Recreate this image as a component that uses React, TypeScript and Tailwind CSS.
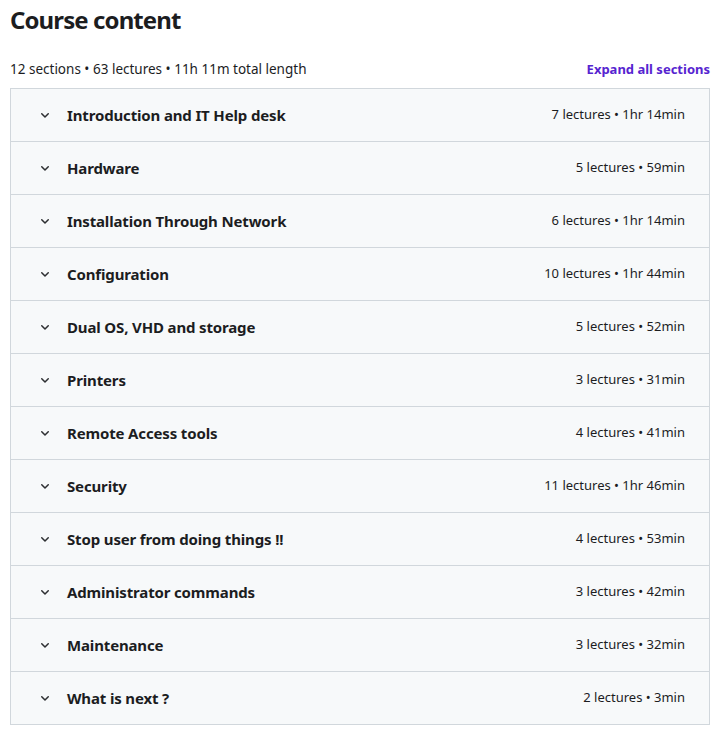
const sections = [
  { title: "Introduction and IT Help desk", meta: "7 lectures • 1hr 14min" },
  { title: "Hardware", meta: "5 lectures • 59min" },
  { title: "Installation Through Network", meta: "6 lectures • 1hr 14min" },
  { title: "Configuration", meta: "10 lectures • 1hr 44min" },
  { title: "Dual OS, VHD and storage", meta: "5 lectures • 52min" },
  { title: "Printers", meta: "3 lectures • 31min" },
  { title: "Remote Access tools", meta: "4 lectures • 41min" },
  { title: "Security", meta: "11 lectures • 1hr 46min" },
  { title: "Stop user from doing things !!", meta: "4 lectures • 53min" },
  { title: "Administrator commands", meta: "3 lectures • 42min" },
  { title: "Maintenance", meta: "3 lectures • 32min" },
  { title: "What is next ?", meta: "2 lectures • 3min" },
];

function Chevron() {
  return (
    <svg width="12" height="12" viewBox="0 0 12 12" fill="none" className="shrink-0">
      <path d="M2.75 4.75 6 8l3.25-3.25" stroke="#2d2f31" strokeWidth="1.5" strokeLinecap="round" strokeLinejoin="round" />
    </svg>
  );
}

export default function App() {
  return (
    <div className="w-[723px] bg-white pl-[10px] pr-[13px] pb-[9px] text-[#1c1d1f] font-['Noto_Sans',sans-serif]">
      <h2 className="h-[38px] text-[24px] leading-[40px] font-bold tracking-[-0.9px]">Course content</h2>
      <div className="flex items-center justify-between pt-[21px] pb-[9px] leading-[20px] text-[13.5px]">
        <span>12 sections • 63 lectures • 11h 11m total length</span>
        <button className="font-bold text-[#5624d0] text-[13px]">Expand all sections</button>
      </div>
      <div className="border border-[#d1d7dc] divide-y divide-[#d1d7dc]">
        {sections.map((s) => (
          <div key={s.title} className="flex items-center h-[52px] box-content bg-[#f7f9fa] pl-[28px] pr-[24px]">
            <Chevron />
            <span className="ml-[16px] font-bold text-[15px] tracking-[-0.15px] flex-1">{s.title}</span>
            <span className="text-[13px]">{s.meta}</span>
          </div>
        ))}
      </div>
    </div>
  );
}
